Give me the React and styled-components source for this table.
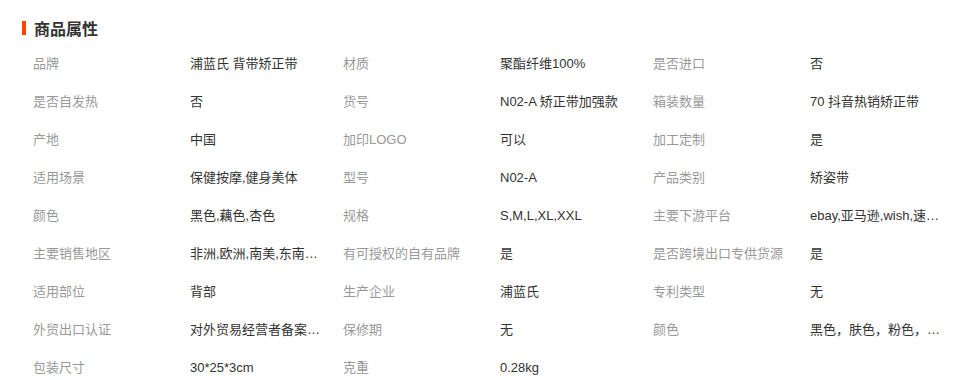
import React from 'react';
import styled, { createGlobalStyle } from 'styled-components';

const GlobalStyle = createGlobalStyle`
  body {
    margin: 0;
    background: #fff;
    font-family: "Liberation Sans", "Noto Sans CJK SC", sans-serif;
  }
`;

const attrs = [
  ['品牌', '浦蓝氏 背带矫正带'],
  ['材质', '聚酯纤维100%'],
  ['是否进口', '否'],
  ['是否自发热', '否'],
  ['货号', 'N02-A 矫正带加强款'],
  ['箱装数量', '70 抖音热销矫正带'],
  ['产地', '中国'],
  ['加印LOGO', '可以'],
  ['加工定制', '是'],
  ['适用场景', '保健按摩,健身美体'],
  ['型号', 'N02-A'],
  ['产品类别', '矫姿带'],
  ['颜色', '黑色,藕色,杏色'],
  ['规格', 'S,M,L,XL,XXL'],
  ['主要下游平台', 'ebay,亚马逊,wish,速卖通,独立站,LAZADA'],
  ['主要销售地区', '非洲,欧洲,南美,东南亚,北美,东北亚,中东'],
  ['有可授权的自有品牌', '是'],
  ['是否跨境出口专供货源', '是'],
  ['适用部位', '背部'],
  ['生产企业', '浦蓝氏'],
  ['专利类型', '无'],
  ['外贸出口认证', '对外贸易经营者备案登记表'],
  ['保修期', '无'],
  ['颜色', '黑色，肤色，粉色，灰色'],
  ['包装尺寸', '30*25*3cm'],
  ['克重', '0.28kg'],
];

const Wrapper = styled.section`
  width: 974px;
  padding-top: 10px;
`;

const Header = styled.h3`
  display: flex;
  align-items: center;
  gap: 8px;
  height: 35px;
  margin: 0;
  padding-left: 22px;
  font-size: 16px;
  font-weight: bold;
  color: #333;
  &::before {
    content: '';
    width: 4px;
    height: 14px;
    background: #ff4400;
  }
`;

const Grid = styled.div`
  display: grid;
  grid-template-columns: 157px 153px 157px 153px 157px 153px;
  padding-left: 33px;
`;

const Cell = styled.div`
  height: 38px;
  line-height: 38px;
  font-size: 13px;
  white-space: nowrap;
  overflow: hidden;
  text-overflow: ellipsis;
  color: ${props => (props.label ? '#999' : '#333')};
  padding-right: ${props => (props.label ? '8px' : '22px')};
`;

const App = () => {
  return (
    <Wrapper>
      <GlobalStyle />
      <Header>商品属性</Header>
      <Grid>
        {attrs.map(([k, v], i) => (
          <React.Fragment key={i}>
            <Cell label>{k}</Cell>
            <Cell>{v}</Cell>
          </React.Fragment>
        ))}
      </Grid>
    </Wrapper>
  );
};

export default App;
